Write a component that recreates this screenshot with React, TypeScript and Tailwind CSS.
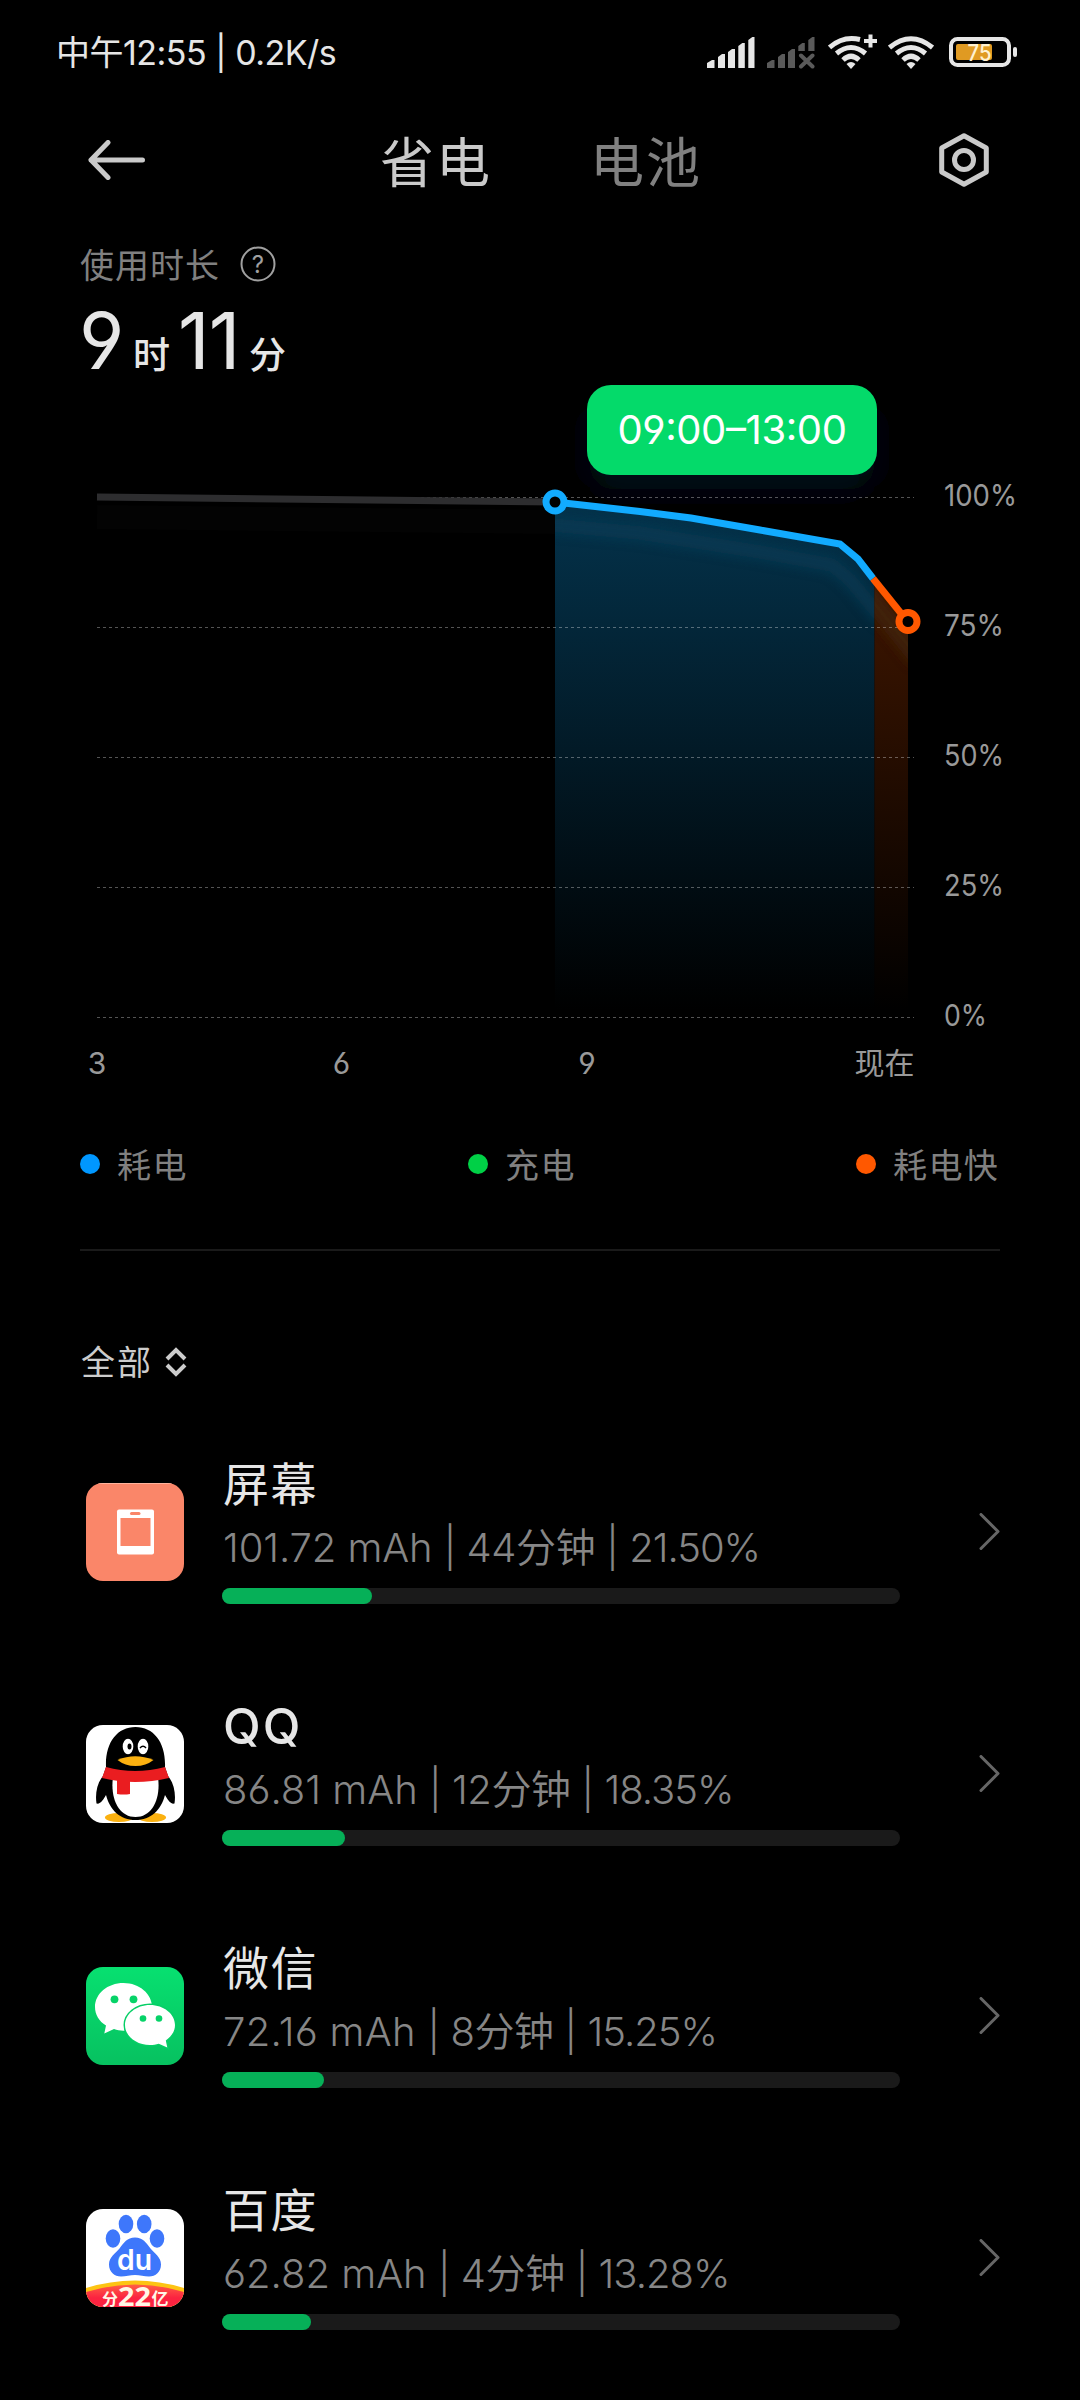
import type { ReactNode } from "react";

interface AppUsage {
  name: string;
  nameClass: string;
  amount: string;
  amountClass: string;
  time: string;
  percent: string;
  barWidth: number;
  icon: ReactNode;
}

const GRID_LINES = [
  { y: 497, label: "100%", width: 73 },
  { y: 627, label: "75%", width: 60 },
  { y: 757, label: "50%", width: 60 },
  { y: 887, label: "25%", width: 60 },
  { y: 1017, label: "0%", width: 43 },
];

const LEGEND = [
  { label: "耗电", dot: "bg-[#0097ff]" },
  { label: "充电", dot: "bg-[#00d046]" },
  { label: "耗电快", dot: "bg-[#ff5800]" },
];

function SignalIcon() {
  return (
    <svg width="48" height="36" viewBox="707 34 48 36" fill="#e6e6e6">
      <path d="M707 63l5-3h2.5v8H707zM718 57l4-3h3v14h-7zM728 52l4-3h3v19h-7zM738.3 46l4-3h2.5v25h-6.5zM748.3 40l4-3h2.2v31h-6.2z" />
    </svg>
  );
}

function NoSignalIcon() {
  return (
    <svg width="48" height="36" viewBox="767 34 48 36" fill="#5a5a5a">
      <path d="M767 63l5-3h2.5v8H767zM778 57l4-3h3v14h-7zM788 52l4-3h3v19h-7zM798.3 46l4-3h2.5v8h-6.5zM808.3 40l4-3h2.2v14h-6.2z" />
      <path d="M801 55.500l11.500 11M812.500 55.500l-11.500 11" stroke="#5a5a5a" strokeWidth="4" strokeLinecap="round" />
    </svg>
  );
}

function WifiIcon({ plus = false }: { plus?: boolean }) {
  return (
    <svg width={plus ? 49 : 46} height="36" viewBox={plus ? "888 34 49 36" : "888 34 46 36"} fill="none" stroke="#e6e6e6" strokeWidth="5">
      <path d={plus ? "M889.500 47.500Q903 35.500 920 39.500" : "M889.500 47.500Q911 30 932.500 47.500"} />
      <path d="M896.500 53.500Q911 41.500 925.500 53.500" />
      <path d="M903 60Q911 52.500 919 60" />
      <path d="M906.500 64Q911 60 915.500 64L911 69z" fill="#e6e6e6" stroke="none" />
      {plus && <path d="M930.500 34.500v13M924 41h13" strokeWidth="4" />}
    </svg>
  );
}

function BatteryIcon() {
  return (
    <svg width="68" height="30" viewBox="949 37 68 30">
      <rect x="951" y="39" width="58" height="26" rx="6.500" fill="none" stroke="#e6e6e6" strokeWidth="4" />
      <rect x="956" y="44" width="36" height="16" rx="2" fill="#e09a22" />
      <rect x="1013" y="47" width="4" height="10" rx="2" fill="#e6e6e6" />
      <text x="967.500" y="60.500" fontSize="23" fill="#fff1d0" textLength="24" lengthAdjust="spacingAndGlyphs" fontWeight="500">
        75
      </text>
    </svg>
  );
}

function StatusBar() {
  return (
    <div className="flex h-[104px] shrink-0 items-center justify-between pl-[56px] pr-[63px] text-[#e6e6e6]">
      <span className="whitespace-nowrap pt-px text-[34px] tracking-[-0.5px]">中午12:55 | 0.2K/s</span>
      <div className="flex items-center">
        <SignalIcon />
        <span className="ml-3 flex">
          <NoSignalIcon />
        </span>
        <span className="ml-[13px] flex">
          <WifiIcon plus />
        </span>
        <span className="ml-[11px] flex">
          <WifiIcon />
        </span>
        <span className="ml-[15px] flex">
          <BatteryIcon />
        </span>
      </div>
    </div>
  );
}

function Header() {
  return (
    <header className="flex h-[112px] shrink-0 items-center pl-[88px] pr-[91px]">
      <svg width="57" height="40" viewBox="0 0 57 40" fill="none" stroke="#cacaca" strokeWidth="5" strokeLinecap="round" strokeLinejoin="round">
        <path d="M54.500 20H3M20 2.500L3 20l17 17.500" />
      </svg>
      <nav className="ml-[235px] flex gap-[98px] pt-[7px] text-[54px] leading-none tracking-[2px]">
        <span className="text-[#cacaca]">省电</span>
        <span className="text-[#808080]">电池</span>
      </nav>
      <svg className="ml-auto" width="50" height="54" viewBox="0 0 50 54" fill="none" stroke="#cacaca" strokeWidth="5" strokeLinejoin="round">
        <path d="M25 2.800L47.300 15v24L25 51.200 2.700 39V15z" />
        <circle cx="25" cy="27" r="9.500" />
      </svg>
    </header>
  );
}

function UsageTime() {
  return (
    <section className="h-[169px] shrink-0 pl-20 pt-6">
      <div className="flex h-[50px] items-center text-[#808080]">
        <span className="pt-px text-[34px] tracking-[1px]">使用时长</span>
        <svg className="mb-0.5 ml-5" width="36" height="36" viewBox="0 0 36 36">
          <circle cx="18" cy="18" r="16.500" fill="none" stroke="#a0a0a0" strokeWidth="2" />
          <text x="18" y="26.500" textAnchor="middle" fontSize="24" fill="#a0a0a0">
            ?
          </text>
        </svg>
      </div>
      <div className="flex h-[95px] items-baseline pt-px leading-[100px] text-[#e6e6e6]">
        <span className="-ml-px w-[54px] text-[78px] tracking-[-4px]">9</span>
        <span className="w-[45px] text-[37px] font-medium">时</span>
        <span className="w-[71px] text-[78px] tracking-[-1px]">11</span>
        <span className="text-[37px] font-medium">分</span>
      </div>
    </section>
  );
}

function BatteryChart() {
  return (
    <section className="relative h-[715px] shrink-0">
      <svg width="1080" height="715" viewBox="0 385 1080 715">
        <defs>
          <linearGradient id="drain" gradientUnits="userSpaceOnUse" x1="0" y1="500" x2="0" y2="1010">
            <stop offset="0" stopColor="#04334c" />
            <stop offset="1" stopColor="#000000" />
          </linearGradient>
          <linearGradient id="fast" gradientUnits="userSpaceOnUse" x1="0" y1="580" x2="0" y2="1010">
            <stop offset="0" stopColor="#3f1600" />
            <stop offset="1" stopColor="#000000" />
          </linearGradient>
          <filter id="soft" filterUnits="userSpaceOnUse" x="80" y="460" width="860" height="250">
            <feGaussianBlur stdDeviation="6" />
          </filter>
          <filter id="halo" filterUnits="userSpaceOnUse" x="520" y="385" width="430" height="170">
            <feGaussianBlur stdDeviation="16" />
          </filter>
          <clipPath id="drainArea">
            <path d="M555 502L640 511.500 691 518 760 530 840 544 858 559 874.500 580V1017H555z" />
          </clipPath>
          <clipPath id="fastArea">
            <path d="M874.500 580L908 622V1017H874.500z" />
          </clipPath>
        </defs>

        <rect x="590" y="405" width="284" height="84" rx="24" fill="#02101c" filter="url(#halo)" />
        <path d="M97 517L555 522" stroke="#ffffff" strokeOpacity="0.013" strokeWidth="24" />

        <g clipPath="url(#drainArea)">
          <rect x="555" y="490" width="320" height="527" fill="url(#drain)" />
          <path d="M540 524L640 533 760 552 832 565 850 580 885 622" fill="none" stroke="#073f5a" strokeWidth="14" filter="url(#soft)" opacity="0.65" />
        </g>
        <g clipPath="url(#fastArea)">
          <rect x="874" y="570" width="34" height="447" fill="url(#fast)" />
          <path d="M862 588L920 660" stroke="#43270c" strokeWidth="18" filter="url(#soft)" opacity="0.8" />
        </g>

        {GRID_LINES.map((line) => (
          <g key={line.label}>
            <path d={`M97 ${line.y + 0.5}H914`} stroke="#ffffff" strokeOpacity="0.33" strokeWidth="1" strokeDasharray="3 3" />
            <text x="944" y={line.y + 9} fontSize="30" fontWeight="400" fill="#999999" textLength={line.width} lengthAdjust="spacingAndGlyphs">
              {line.label}
            </text>
          </g>
        ))}

        <path d="M97 497L555 502" stroke="#2d2d2f" strokeWidth="7" />
        <path d="M555 502L640 511.500 691 518 760 530 840 544 858 559 873 578.500" fill="none" stroke="#12abff" strokeWidth="7" />
        <path d="M873 578.500L908 622" stroke="#ff5800" strokeWidth="7" />
        <circle cx="555" cy="502" r="9" fill="#000000" stroke="#12abff" strokeWidth="7" />
        <circle cx="908" cy="621.500" r="9" fill="#000000" stroke="#ff5800" strokeWidth="7" />

        <g fontSize="30" fontWeight="400" fill="#999999" textAnchor="middle">
          <text x="97" y="1074">3</text>
          <text x="341.500" y="1074">6</text>
          <text x="587" y="1074">9</text>
          <text x="884.500" y="1074">现在</text>
        </g>
      </svg>
      <div className="absolute left-[587px] top-0 flex h-[90px] w-[290px] items-center justify-center whitespace-nowrap rounded-[24px] bg-[#04da6a] text-[40px] tracking-[-0.4px] text-white [font-feature-settings:'cv04','case']">
        09:00–13:00
      </div>
    </section>
  );
}

function Legend() {
  return (
    <div className="mx-20 flex h-32 shrink-0 items-center">
      {LEGEND.map((item) => (
        <div key={item.label} className="flex w-[388px] shrink-0 items-center last:w-auto">
          <span className={`size-5 rounded-full ${item.dot}`} />
          <span className="ml-[17px] pt-0.5 text-[34px] tracking-[1.4px] text-[#808080]">{item.label}</span>
        </div>
      ))}
    </div>
  );
}

function ScreenIcon() {
  return (
    <svg width="98" height="98" viewBox="0 0 98 98">
      <rect width="98" height="98" fill="#fa8669" />
      <path d="M12 0.500h74" stroke="#ffb39c" strokeWidth="1" />
      <rect x="31" y="26.500" width="37" height="45" rx="2" fill="#ffffff" />
      <rect x="34.500" y="35" width="30" height="28" fill="#fa8669" />
      <rect x="44" y="29" width="10.500" height="3" rx="1.500" fill="#fa8669" />
    </svg>
  );
}

function QQIcon() {
  return (
    <svg width="98" height="98" viewBox="0 0 98 98">
      <rect width="98" height="98" fill="#ffffff" />
      <ellipse cx="33" cy="92.500" rx="14" ry="4.500" fill="#fbb110" />
      <ellipse cx="66" cy="92.500" rx="14" ry="4.500" fill="#fbb110" />
      <path d="M17 51C11 58 9 69 10.500 78.500c4 1 7-4 9.500-8.500 4 15 14 25 29.500 25S75 85 79 70c2.500 4.500 5.500 9.500 9.500 8.500C90 69 88 58 82 51L79 42C80 18 68 2 49.500 2S19 18 20 42z" fill="#000000" />
      <path d="M27 52C24 74 33 92 49.500 92S75 74 72 52z" fill="#ffffff" />
      <path d="M20 42Q49 50 79 42L83 53Q49 61 16 53z" fill="#ea1d20" />
      <path d="M31 53h13v16q-6 1-13 0z" fill="#ea1d20" />
      <ellipse cx="42" cy="21.500" rx="5.300" ry="7.800" fill="#ffffff" />
      <ellipse cx="57" cy="21.500" rx="5.300" ry="7.800" fill="#ffffff" />
      <ellipse cx="43.500" cy="21.500" rx="2" ry="3" fill="#000000" />
      <path d="M54 23q3-3.500 6 0" fill="none" stroke="#000000" strokeWidth="1.500" />
      <path d="M31.500 35Q49 27.500 67.500 35 60 41 49.500 41T31.500 35z" fill="#fbb110" />
    </svg>
  );
}

function WeChatIcon() {
  return (
    <svg width="98" height="98" viewBox="0 0 98 98">
      <defs>
        <linearGradient id="wechat" x1="0" y1="0" x2="0" y2="1">
          <stop offset="0" stopColor="#07e070" />
          <stop offset="1" stopColor="#07c160" />
        </linearGradient>
      </defs>
      <rect width="98" height="98" fill="url(#wechat)" />
      <path d="M37.500 16C21.500 16 9 26.700 9 40c0 7.500 4 14.200 11 18.600L18.300 66.500 28 62c3 1 6 1.700 9.500 1.700C53.500 63.700 66 53 66 40S53.500 16 37.500 16z" fill="#ffffff" />
      <path d="M64 38c13.800 0 25 9 25 20 0 6.200-3.500 11.500-9.200 15.400l1.500 7-8.500-3.700c-2.800.9-5.600 1.300-8.800 1.300-13.800 0-25-9-25-20s11.200-20 25-20z" fill="#ffffff" stroke="#06cf66" strokeWidth="3" paintOrder="stroke" />
      <g fill="#06d368">
        <circle cx="28.500" cy="32.300" r="3.900" />
        <circle cx="47.500" cy="32.300" r="3.900" />
        <circle cx="57" cy="51.500" r="3.300" />
        <circle cx="73" cy="51.500" r="3.300" />
      </g>
    </svg>
  );
}

function BaiduIcon() {
  return (
    <svg width="98" height="98" viewBox="0 0 98 98">
      <defs>
        <linearGradient id="banner" x1="0" y1="0" x2="0" y2="1">
          <stop offset="0" stopColor="#ff5f45" />
          <stop offset="0.6" stopColor="#fb2340" />
        </linearGradient>
      </defs>
      <rect width="98" height="98" fill="#ffffff" />
      <g fill="#3e77fb">
        <ellipse cx="40" cy="15" rx="7.300" ry="9.300" />
        <ellipse cx="58.200" cy="15" rx="7.300" ry="9.300" />
        <ellipse cx="27" cy="29.500" rx="7.300" ry="9.200" />
        <ellipse cx="71" cy="29.500" rx="7.300" ry="9.200" />
        <path d="M49 28.500c8 0 11 5 15.500 11 4 5 10.500 8.500 10.500 16C75 63 69.500 67.500 63 67.500c-5 0-9-1.500-14-1.500s-9 1.500-14 1.500c-6.500 0-12-4.500-12-12 0-7.500 6.500-11 10.500-16C38 33.500 41 28.500 49 28.500z" />
      </g>
      <text x="48.500" y="60.500" textAnchor="middle" fontSize="29" fontWeight="600" fill="#ffffff" textLength="35" lengthAdjust="spacingAndGlyphs">
        du
      </text>
      <path d="M0 79Q49 64 98 79V98H0z" fill="#fdc413" />
      <path d="M0 83Q49 68 98 83V98H0z" fill="url(#banner)" />
      <g fill="#fff7e6" fontWeight="700">
        <text x="16" y="96" fontSize="16">分</text>
        <text x="32" y="97" fontSize="27" fontFamily="Noto Sans" textLength="33" lengthAdjust="spacingAndGlyphs">22</text>
        <text x="65.500" y="96" fontSize="17">亿</text>
      </g>
    </svg>
  );
}

const APPS: AppUsage[] = [
  {
    name: "屏幕",
    nameClass: "text-[46px] tracking-[1.5px]",
    amount: "101.72 mAh",
    amountClass: "tracking-[-0.1px]",
    time: "44分钟",
    percent: "21.50%",
    barWidth: 150,
    icon: <ScreenIcon />,
  },
  {
    name: "QQ",
    nameClass: "text-[49px] font-medium tracking-[2px]",
    amount: "86.81 mAh",
    amountClass: "tracking-[0px]",
    time: "12分钟",
    percent: "18.35%",
    barWidth: 123,
    icon: <QQIcon />,
  },
  {
    name: "微信",
    nameClass: "text-[46px] tracking-[1.5px]",
    amount: "72.16 mAh",
    amountClass: "tracking-[0.3px]",
    time: "8分钟",
    percent: "15.25%",
    barWidth: 102,
    icon: <WeChatIcon />,
  },
  {
    name: "百度",
    nameClass: "text-[46px] tracking-[1.5px]",
    amount: "62.82 mAh",
    amountClass: "tracking-[0px]",
    time: "4分钟",
    percent: "13.28%",
    barWidth: 89,
    icon: <BaiduIcon />,
  },
];

function AppRow({ app }: { app: AppUsage }) {
  return (
    <li className="flex h-[242px] items-center pl-[86px] pr-20">
      <div className="size-[98px] shrink-0 overflow-hidden rounded-[17px]">{app.icon}</div>
      <div className="ml-[38px] flex h-full w-[678px] flex-col pt-[45px]">
        <h3 className={`h-14 pl-px leading-[57px] text-[#e6e6e6] ${app.nameClass}`}>{app.name}</h3>
        <p className="mt-1 h-16 whitespace-nowrap pl-px text-[40px] font-[350] leading-[64px] tracking-[-0.4px] text-[#868686]">
          <span className={app.amountClass}>{app.amount} </span>| {app.time} |{" "}
          <span className="tracking-[-1px]">{app.percent}</span>
        </p>
        <div className="mt-2 h-4 rounded-full bg-[#1a1a1a]">
          <div className="h-full rounded-full bg-[#06b058]" style={{ width: app.barWidth }} />
        </div>
      </div>
      <svg className="ml-auto" width="21" height="38" viewBox="0 0 21 38" fill="none" stroke="#666666" strokeWidth="3" strokeLinecap="round" strokeLinejoin="round">
        <path d="M2 1.500l17 17-17 17" />
      </svg>
    </li>
  );
}

export default function App() {
  return (
    <main className="flex h-[2400px] w-[1080px] flex-col overflow-hidden bg-black font-[Inter,'Noto_Sans_CJK_SC',sans-serif] [font-feature-settings:'cv03','cv04']">
      <StatusBar />
      <Header />
      <UsageTime />
      <BatteryChart />
      <Legend />
      <div className="mx-20 mt-[21px] h-0.5 shrink-0 bg-[#1a1a1a]" />
      <div className="mt-[62px] flex h-[98px] shrink-0 items-center pl-[81px]">
        <span className="text-[34px] tracking-[2px] text-[#cccccc]">全部</span>
        <svg className="ml-3" width="22" height="30" viewBox="0 0 22 30" fill="none" stroke="#cccccc" strokeWidth="4">
          <path d="M2 12l9-9 9 9M2 18l9 9 9-9" />
        </svg>
      </div>
      <ul>
        {APPS.map((app) => (
          <AppRow key={app.name} app={app} />
        ))}
      </ul>
    </main>
  );
}
